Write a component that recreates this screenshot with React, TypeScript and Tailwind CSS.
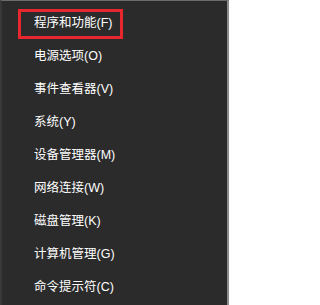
const items = [
  "程序和功能(F)",
  "电源选项(O)",
  "事件查看器(V)",
  "系统(Y)",
  "设备管理器(M)",
  "网络连接(W)",
  "磁盘管理(K)",
  "计算机管理(G)",
  "命令提示符(C)",
]

export default function App() {
  return (
    <div
      className="flex h-[305px] w-[229px] border-t border-r-2 border-l-2 border-t-[#6b6b6b] border-r-[#8c8c8c] border-l-[#383838] bg-[#2b2b2b] pt-[6px] text-[12.5px] text-white"
      style={{ fontFamily: '"Liberation Sans", "Noto Sans CJK SC", sans-serif' }}
    >
      <ul className="flex w-full flex-col">
        {items.map((label, i) => (
          <li key={label} className="flex h-[33px] items-center pl-[16px]">
            {i === 0 ? (
              <span className="flex h-[30px] w-[105px] items-center border-[3px] border-[#e8262d] pl-[13px]">
                {label}
              </span>
            ) : (
              <span className="pl-[16px]">{label}</span>
            )}
          </li>
        ))}
      </ul>
    </div>
  )
}
